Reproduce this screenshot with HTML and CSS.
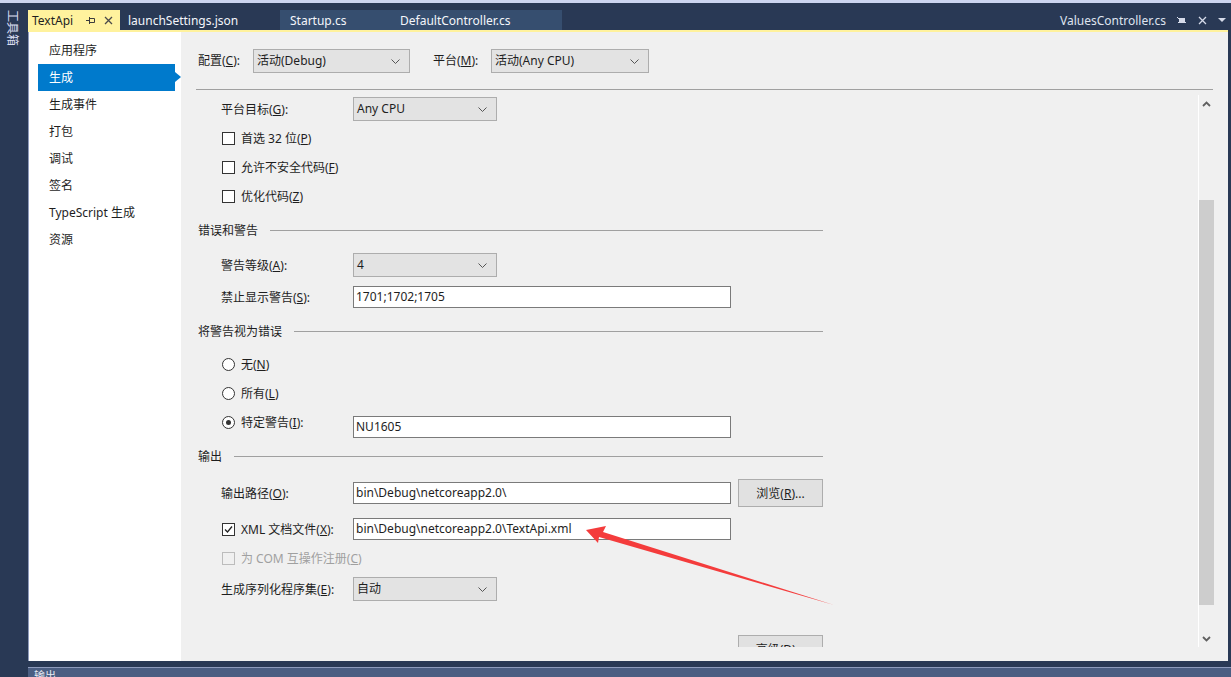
FILE: index.html
```html
<!DOCTYPE html>
<html lang="zh-CN">
<head>
    <meta charset="UTF-8">
    <title>TextApi - 生成</title>
    <link rel="stylesheet" href="styles.css">
</head>
<body>
    <div class="topline"></div>
    <div class="ide">
        <div class="toolstrip"><span class="toolbox">工具箱</span></div>
        <div class="docwell">
            <div class="tabbar">
                <div class="tab active">
                    <span>TextApi</span>
                    <svg class="pin" width="10" height="8" viewBox="0 0 10 8"><path d="M0 4.5H3M3.5 1V8M3.5 2.5H8.5V6.5H3.5" fill="none" stroke="#3c3c3c"/></svg>
                    <svg class="close" width="9" height="9" viewBox="0 0 9 9"><path d="M1 1L8 8M8 1L1 8" stroke="#4a4a4a" stroke-width="1.3"/></svg>
                </div>
                <div class="tab launch">launchSettings.json</div>
                <div class="preview">
                    <div class="tab startup">Startup.cs</div>
                    <div class="tab default">DefaultController.cs</div>
                </div>
                <div class="spacer"></div>
                <div class="tab pinned">
                    <span>ValuesController.cs</span>
                    <svg class="pin2" width="10" height="9" viewBox="0 0 10 9"><path d="M1 1L3 3" stroke="#d6dbe9"/><rect x="3" y="2" width="6" height="4" fill="#d6dbe9"/><path d="M2 6.5H10" stroke="#d6dbe9"/></svg>
                    <svg class="close2" width="9" height="9" viewBox="0 0 9 9"><path d="M1 1L8 8M8 1L1 8" stroke="#d6dbe9" stroke-width="1.3"/></svg>
                    <svg class="drop" width="8" height="5" viewBox="0 0 8 5"><path d="M0 0H8L4 4Z" fill="#d6dbe9"/></svg>
                </div>
            </div>

            <div class="page">
                <nav class="sidenav">
                    <div class="navitem">应用程序</div>
                    <div class="navitem selected">生成</div>
                    <div class="navitem">生成事件</div>
                    <div class="navitem">打包</div>
                    <div class="navitem">调试</div>
                    <div class="navitem">签名</div>
                    <div class="navitem">TypeScript 生成</div>
                    <div class="navitem">资源</div>
                </nav>

                <main class="props">
                    <div class="toprow">
                        <span class="toplabel cfg">配置(<u>C</u>):</span>
                        <div class="combo wide1">活动(Debug)<svg class="chev" width="9" height="5" viewBox="0 0 9 5"><path d="M0.5 0.5L4.5 4.5L8.5 0.5" fill="none" stroke="#555"/></svg></div>
                        <span class="toplabel plat">平台(<u>M</u>):</span>
                        <div class="combo wide2">活动(Any CPU)<svg class="chev" width="9" height="5" viewBox="0 0 9 5"><path d="M0.5 0.5L4.5 4.5L8.5 0.5" fill="none" stroke="#555"/></svg></div>
                    </div>
                    <div class="divider"></div>

                    <div class="scroller">
                        <div class="form">
                            <div class="row">
                                <label>平台目标(<u>G</u>):</label>
                                <div class="combo">Any CPU<svg class="chev" width="9" height="5" viewBox="0 0 9 5"><path d="M0.5 0.5L4.5 4.5L8.5 0.5" fill="none" stroke="#555"/></svg></div>
                            </div>
                            <div class="row"><span class="check"></span>首选 32 位(<u>P</u>)</div>
                            <div class="row"><span class="check"></span>允许不安全代码(<u>F</u>)</div>
                            <div class="row"><span class="check"></span>优化代码(<u>Z</u>)</div>

                            <div class="section">错误和警告</div>
                            <div class="row">
                                <label>警告等级(<u>A</u>):</label>
                                <div class="combo">4<svg class="chev" width="9" height="5" viewBox="0 0 9 5"><path d="M0.5 0.5L4.5 4.5L8.5 0.5" fill="none" stroke="#555"/></svg></div>
                            </div>
                            <div class="row mt8">
                                <label>禁止显示警告(<u>S</u>):</label>
                                <div class="textbox">1701;1702;1705</div>
                            </div>

                            <div class="section">将警告视为错误</div>
                            <div class="row radio-first"><span class="radio"></span>无(<u>N</u>)</div>
                            <div class="row"><span class="radio"></span>所有(<u>L</u>)</div>
                            <div class="row lowinput">
                                <label><span class="radio on"></span>特定警告(<u>I</u>):</label>
                                <div class="textbox">NU1605</div>
                            </div>

                            <div class="section after-low">输出</div>
                            <div class="row tall">
                                <label>输出路径(<u>O</u>):</label>
                                <div class="textbox">bin\Debug\netcoreapp2.0\</div>
                                <button class="btn">浏览(<u>R</u>)...</button>
                            </div>
                            <div class="row mt10">
                                <label><span class="check on"><svg width="11" height="11" viewBox="0 0 11 11"><path d="M2 5.5L4.5 8L9 2.5" fill="none" stroke="#222" stroke-width="1.3"/></svg></span>XML 文档文件(<u>X</u>):</label>
                                <div class="textbox">bin\Debug\netcoreapp2.0\TextApi.xml</div>
                            </div>
                            <div class="row disabled"><span class="check"></span>为 COM 互操作注册(<u>C</u>)</div>
                            <div class="row mt7">
                                <label>生成序列化程序集(<u>E</u>):</label>
                                <div class="combo">自动<svg class="chev" width="9" height="5" viewBox="0 0 9 5"><path d="M0.5 0.5L4.5 4.5L8.5 0.5" fill="none" stroke="#555"/></svg></div>
                            </div>
                            <div class="row tall mt34">
                                <button class="btn advanced">高级(<u>D</u>)...</button>
                            </div>
                        </div>

                        <div class="vscroll">
                            <div class="arrow"><svg width="9" height="6" viewBox="0 0 9 6"><path d="M1 5L4.5 1.5L8 5" fill="none" stroke="#606060" stroke-width="1.8"/></svg></div>
                            <div class="track"><div class="thumb"></div></div>
                            <div class="arrow"><svg width="9" height="6" viewBox="0 0 9 6"><path d="M1 1L4.5 4.5L8 1" fill="none" stroke="#606060" stroke-width="1.8"/></svg></div>
                        </div>
                    </div>
                </main>
            </div>
        </div>
    </div>
    <div class="statusbar">
        <div class="statusline"></div>
        <div class="outputbar"><span>输出</span></div>
    </div>

    <!-- 红色标注箭头 -->
    <svg class="annot" width="1231" height="677" viewBox="0 0 1231 677">
        <path d="M586 530 L606 526 L603 532 L834 605 L599 537 L598 543 Z" fill="#f43c3c"/>
    </svg>
</body>
</html>
```

FILE: styles.css
```css
* {
    box-sizing: border-box;
}

html, body {
    margin: 0;
    height: 100%;
}

body {
    background-color: #293955;
    font-family: "Noto Sans", "Noto Sans CJK SC", sans-serif;
    font-size: 12px;
    color: #1e1e1e;
    overflow: hidden;
    position: relative;
}

.topline {
    height: 3px;
    background-color: #ccd5f0;
}

.ide {
    display: flex;
    height: 658px;
}

.toolstrip {
    width: 28px;
    padding: 7px 0 0 6px;
}
.toolbox {
    writing-mode: vertical-rl;
    text-orientation: sideways;
    color: #d9ddf2;
    font-size: 12px;
    line-height: 13px;
}

.docwell {
    flex: 1;
    display: flex;
    flex-direction: column;
    margin-right: 3px;
}

/* tabs */
.tabbar {
    height: 29px;
    display: flex;
    align-items: flex-end;
    border-bottom: 2px solid #fff29d;
}
.tab {
    height: 20px;
    display: flex;
    align-items: center;
    color: #f4f6fb;
    white-space: nowrap;
}
.tab.active {
    background-color: #fff29d;
    color: #1e1e1e;
    width: 92px;
    padding-left: 4px;
}
.tab.active .pin {
    margin-left: 13px;
}
.tab.active .close {
    margin-left: 8px;
}
.tab.launch {
    width: 160px;
    padding-left: 8px;
}
.preview {
    display: flex;
    background-color: #364e6f;
}
.tab.startup {
    width: 110px;
    padding-left: 10px;
}
.tab.default {
    width: 172px;
    padding-left: 10px;
}
.spacer {
    flex: 1;
}
.tab.pinned {
    padding-right: 2px;
    color: #dfe4f0;
}
.tab.pinned .pin2 {
    margin-left: 10px;
}
.tab.pinned .close2 {
    margin-left: 12px;
}
.tab.pinned .drop {
    margin-left: 11px;
}

/* page */
.page {
    flex: 1;
    display: flex;
    border-left: 1px solid #8e9bbc;
}

.sidenav {
    width: 152px;
    background-color: #fff;
    padding-top: 5px;
}
.navitem {
    position: relative;
    height: 27px;
    line-height: 27px;
    margin-left: 9px;
    width: 137px;
    padding-left: 11px;
}
.navitem.selected {
    background-color: #007acc;
    color: #fff;
}
.navitem.selected::after {
    content: "";
    position: absolute;
    right: -6px;
    top: 8px;
    border-left: 6px solid #007acc;
    border-top: 5px solid transparent;
    border-bottom: 5px solid transparent;
}

.props {
    flex: 1;
    background-color: #f0f0f0;
    display: flex;
    flex-direction: column;
}

.toprow {
    height: 57px;
    display: flex;
    align-items: flex-start;
    padding: 17px 0 0 17px;
}
.toplabel {
    line-height: 24px;
}
.toplabel.cfg {
    width: 55px;
}
.toplabel.plat {
    width: 58px;
    margin-left: 23px;
}

.divider {
    height: 1px;
    background-color: #a0a0a0;
    margin: 0 15px;
}

/* controls */
.combo {
    position: relative;
    width: 144px;
    height: 24px;
    line-height: 22px;
    padding-left: 3px;
    border: 1px solid #adadad;
    background-color: #e3e3e3;
}
.combo.wide1 {
    width: 157px;
}
.combo.wide2 {
    width: 158px;
}
.chev {
    position: absolute;
    right: 9px;
    top: 9px;
}

.textbox {
    width: 378px;
    height: 22px;
    line-height: 20px;
    padding-left: 2px;
    border: 1px solid #7a7a7a;
    background-color: #fff;
}

.btn {
    width: 85px;
    height: 28px;
    margin-left: 7px;
    border: 1px solid #adadad;
    background-color: #e1e1e1;
    font-family: inherit;
    font-size: 12px;
    color: #1e1e1e;
    padding: 0;
}
.btn.advanced {
    margin-left: 517px;
}

.check, .radio {
    display: inline-block;
    width: 13px;
    height: 13px;
    border: 1px solid #333;
    background-color: #fff;
    margin: 0 6px 0 1px;
    flex-shrink: 0;
    position: relative;
}
.check svg {
    position: absolute;
    left: 0;
    top: 0;
}
.radio {
    border-radius: 50%;
}
.radio.on::after {
    content: "";
    position: absolute;
    left: 3px;
    top: 3px;
    width: 5px;
    height: 5px;
    border-radius: 50%;
    background-color: #333;
}

/* scroller */
.scroller {
    height: 557px;
    display: flex;
    overflow: hidden;
}
.form {
    flex: 1;
    padding-top: 7px;
    overflow: hidden;
}

.row {
    display: flex;
    align-items: center;
    height: 24px;
    margin-top: 5px;
    padding-left: 40px;
    white-space: nowrap;
}
.row:first-child {
    margin-top: 0;
}
.row label {
    width: 132px;
    display: flex;
    align-items: center;
}
.row.tall {
    height: 28px;
}
.row.mt7 {
    margin-top: 7px;
}
.row.mt8 {
    margin-top: 8px;
}
.row.mt10 {
    margin-top: 10px;
}
.row.mt34 {
    margin-top: 34px;
}
.row.lowinput {
    height: 28px;
    align-items: flex-start;
}
.row.lowinput label {
    height: 24px;
}
.row.lowinput .textbox {
    margin-top: 6px;
}
.row.disabled {
    color: #a0a0a0;
}
.row.disabled .check {
    border-color: #bcbcbc;
    background-color: #f0f0f0;
}

.section {
    display: flex;
    align-items: center;
    width: 625px;
    height: 24px;
    margin: 10px 0 0 17px;
}
.section::after {
    content: "";
    flex: 1;
    height: 1px;
    background-color: #a0a0a0;
    margin-left: 12px;
}
.section + .row {
    margin-top: 11px;
}
.section + .radio-first {
    margin-top: 9px;
}
.section.after-low {
    margin-top: 6px;
}

.vscroll {
    width: 16px;
    margin: 5px 14px 0 0;
    border-left: 1px solid #fff;
    display: flex;
    flex-direction: column;
}
.vscroll .arrow {
    height: 17px;
    display: flex;
    align-items: center;
    justify-content: center;
}
.vscroll .track {
    flex: 1;
}
.vscroll .thumb {
    margin-top: 88px;
    height: 405px;
    background-color: #cdcdcd;
}

/* bottom */
.statusbar {
    height: 16px;
    margin-left: 28px;
}
.statusline {
    height: 7px;
    border-bottom: 1px solid #8e9bbc;
}
.outputbar {
    height: 9px;
    background-color: #4b5e82;
    color: #e6e9f2;
    font-size: 11px;
    line-height: 16px;
    padding-left: 6px;
    overflow: hidden;
}

.annot {
    position: absolute;
    left: 0;
    top: 0;
    pointer-events: none;
}
```
